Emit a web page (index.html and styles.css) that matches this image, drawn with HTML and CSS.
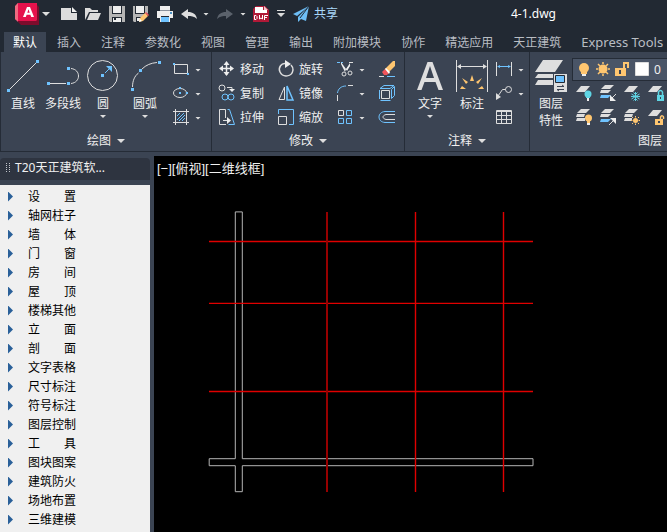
FILE: index.html
```html
<!DOCTYPE html>
<html lang="zh-CN">
<head>
<meta charset="utf-8">
<title>4-1.dwg</title>
<link rel="stylesheet" href="styles.css">
</head>
<body>
<div class="app">
  <header class="titlebar">
    <button class="tool logo" aria-label="A"><svg width="24" height="22" viewBox="0 0 24 22"><path d="M3 0h17l4 4v18H6l-3-3z" fill="#7d0c2c"/><path d="M0 4 3 0v19l-3-3z" fill="#f0506e"/><path d="M3 0h19v17l-1 1H3z" fill="#e5124c"/><path d="M3 0 0 3v13l3 2z" fill="#ee6a80"/><path d="m8 14 4-10h3l4 10h-2.800l-.8-2.200h-3.800l-.8 2.200zm4.300-4.200h2.400l-1.200-3.500z" fill="#fff"/></svg></button>
    <button class="tool mini" aria-label="菜单"><i class="caret"></i></button>
    <div class="quick">
      <button class="tool" aria-label="新建"><svg viewBox="0 0 16 16"><path d="M0 2h10v5h6v7H0z" fill="#dcdcdc"/><path d="m11 1 5 5h-5z" fill="#f2f2f2"/></svg></button>
      <button class="tool" aria-label="打开"><svg viewBox="0 0 16 16"><path d="M0 14V2h5l2 2h6v2H4z" fill="#dcdcdc"/><path d="M5 7h11l-3 7H2z" fill="#dcdcdc"/></svg></button>
      <button class="tool" aria-label="保存"><svg viewBox="0 0 16 16"><path d="M0 0h16v16H1l-1-1z" fill="#b5b5b5"/><path d="M3 0h10v8H3z" fill="#222933"/><path d="M4 0h8v7H4z" fill="#eee"/><path d="M3 11h10v5H3z" fill="#222933"/><path d="M4 12h8v4H4z" fill="#eee"/><path d="M5 12h2v2H5z" fill="#222933"/></svg></button>
      <button class="tool" aria-label="另存为"><svg viewBox="0 0 16 16"><path d="M0 0h15v7l-8 9H1l-1-1z" fill="#b5b5b5"/><path d="M2 0h10v8H2z" fill="#222933"/><path d="M3 0h8v7H3z" fill="#eee"/><path d="M3 11h6v5H3z" fill="#222933"/><path d="M4 12h4v3H4z" fill="#eee"/><path d="m6 16 1-4 5-5 3 3-5 5z" fill="#ffc670"/><path d="m12 7 1-1 3 3-1 1z" fill="#f2555a"/><path d="m6 16 1-3 2 2z" fill="#fff"/></svg></button>
      <button class="tool" aria-label="打印"><svg viewBox="0 0 16 16"><path d="M3 0h10v4H3zM0 5h16v7h-3v-2H3v2H0z" fill="#eee"/><path d="M3 4h10v1H3z" fill="#8b929c"/><path d="M4 11h8v5H4z" fill="#6fc3ff"/><path d="M3 10h1v6H3zm9 0h1v6h-1z" fill="#eee"/><path d="M13 6h2v2h-2z" fill="#4a90c4"/></svg></button>
      <button class="tool" aria-label="放弃"><svg viewBox="0 0 16 16"><path d="M0 8 7 3v3c5 0 8 2 9 7-3-3-6-3-9-3v3z" fill="#dedede"/></svg></button>
    </div>
    <button class="tool mini" aria-label="放弃列表"><i class="caret small"></i></button>
    <button class="tool redo" aria-label="重做"><svg viewBox="0 0 16 16"><path d="M16 8 9 3v3C4 6 1 8 0 13c3-3 6-3 9-3v3z" fill="#5b626c"/></svg></button>
    <button class="tool mini" aria-label="重做列表"><i class="caret small"></i></button>
    <button class="tool dwf" aria-label="DWF"><svg viewBox="0 0 16 16"><path d="M3 0h9l4 4v12H0V3z" fill="#b01937"/><path d="M2 1h8v3h4v4H2z" fill="#fff"/><path d="M11 0l4 4h-4z" fill="#f1c5cc"/><path d="M0 7h16v8H0z" fill="#b01937"/><path d="M1.500 9.500v4H3l1-1v-2l-1-1zM6.500 9v4l1.500-1 1.500 1V9M11.500 14V9.500H15m-3.500 2H14" fill="none" stroke="#fff"/></svg></button>
    <button class="tool mini" aria-label="自定义"><svg width="8" height="8" viewBox="0 0 8 8"><path d="M0 0h8v1H0zM0 3h8L4 7z" fill="#dcdcdc"/></svg></button>
    <button class="tool share"><svg viewBox="0 0 16 16"><path d="M16 0 0 8l4 2zM16 0 5 11v5l3-3 5 2z" fill="#6dbdf5"/><path d="m16 0-9 12" stroke="#222933" fill="none"/></svg>共享</button>
    <h1 class="doc">4-1.dwg</h1>
  </header>

  <nav class="tabs">
    <button class="tab on">默认</button><button class="tab">插入</button><button class="tab">注释</button><button class="tab">参数化</button><button class="tab">视图</button><button class="tab">管理</button><button class="tab">输出</button><button class="tab">附加模块</button><button class="tab">协作</button><button class="tab">精选应用</button><button class="tab">天正建筑</button><button class="tab latin">Express Tools</button>
  </nav>

  <div class="ribbon">
    <section class="panel draw">
      <div class="body">
        <button class="big"><svg viewBox="0 0 32 32"><path class="w" d="M2 30 30 2"/><path class="bf" d="M0 29h3v3H0zM29 0h3v3h-3z"/></svg><span>直线</span></button>
        <button class="big"><svg viewBox="0 0 32 32"><path class="w" d="M2 23.500h17M24 8.500c10 1 10 14 0 15"/><path class="bf" d="M0 22h3v3H0zM20 22h3v3h-3zM20 7h3v3h-3z"/></svg><span>多段线</span></button>
        <button class="big"><svg viewBox="0 0 32 32"><circle class="w" cx="15.500" cy="15.500" r="15"/><path class="b" d="m18 13 5-5"/><path class="bf" d="M14 14h3v3h-3zM25 6v6l-6-6z"/></svg><span>圆</span><i class="caret small"></i></button>
        <button class="big wide"><svg viewBox="0 0 32 32"><path class="w" d="M3.500 27c0-6 2-11 6-14M13 9c4-4 9-6 15-6.500"/><path class="bf" d="M2 28h3v3H2zM10 9h3v3h-3zM29 1h3v3h-3z"/></svg><span>圆弧</span><i class="caret small"></i></button>
        <div class="stack">
          <button class="sm" aria-label="矩形"><svg viewBox="0 0 18 18"><path class="w" d="M2.500 4.500h13v9h-13z"/><path class="bf" d="M1 3h2v2H1zM15 13h2v2h-2z"/></svg><i class="caret small"></i></button>
          <button class="sm" aria-label="椭圆"><svg viewBox="0 0 18 18"><ellipse class="w" cx="8" cy="9" rx="6.500" ry="4.500"/><path class="bf" d="M7 3h2v2H7zM7 8h2v2H7zM14 8h2v2h-2z"/></svg><i class="caret small"></i></button>
          <button class="sm" aria-label="图案填充"><svg viewBox="0 0 18 18"><path class="w" d="M1 3.500h16M1 14.500h16M3.500 1v16M14.500 1v16"/><path class="b" d="m5 8 3-3m-3 7 7-7m-5 8 6-6m-3 6 3-3"/></svg><i class="caret small"></i></button>
        </div>
      </div>
      <button class="name">绘图<i class="caret"></i></button>
    </section>

    <section class="panel modify">
      <div class="edit">
        <button class="sm"><svg viewBox="0 0 18 18"><path d="M8.500 3v12M3 8.500h11" stroke="#eee" stroke-width="1.500"/><path d="m8.500 1 3 4h-6zM8.500 16l3-4h-6zM1 8.500l4-3v6zM16 8.500l-4-3v6z" fill="#eee"/></svg>移动</button>
        <button class="sm"><svg viewBox="0 0 18 18"><path class="w" d="M10 4C4 2 1 8 3 12c3 6 12 5 13-2 0-2-1-4-2-5" stroke-width="1.500"/><path d="m8 0 6 4-6 4z" fill="#eee"/></svg>旋转</button>
        <button class="sm" aria-label="修剪"><svg viewBox="0 0 18 18"><path class="b" d="M1 2.500h6" stroke-dasharray="3 1"/><path class="w" d="M13 2.500h4M10 10l4-5"/><path d="m5 2 5 7-1 3-4-8zM14 3v3l-3 5-1-2z" fill="#eee"/><circle class="w" cx="8" cy="14" r="2"/><circle class="w" cx="14" cy="13" r="2"/></svg><i class="caret small"></i></button>
        <button class="sm" aria-label="删除"><svg viewBox="0 0 18 18"><path d="m7 9 8-8h2v5l-7 7z" fill="#ffc670"/><path d="m4 12 3-3 4 4-2 2H6z" fill="#f2555a"/><path d="m7 9 1-1 4 4-1 2z" fill="#fff"/><path class="w" d="M1 16.500h5"/><path class="b" d="M9 16.500h8"/></svg></button>

        <button class="sm"><svg viewBox="0 0 18 18"><circle class="w" cx="4" cy="4" r="3"/><circle class="b" cx="7" cy="13" r="3"/><circle class="b" cx="13" cy="13" r="3"/><path class="w" d="M9 3.500h5v3"/><path d="M11 5h6l-3 3z" fill="#eee"/></svg>复制</button>
        <button class="sm"><svg viewBox="0 0 18 18"><path class="w" d="M7.500 3v12.500H2z"/><path d="M10 2v14h6z" fill="none" stroke="#6fc3ff" stroke-width="1.500"/></svg>镜像</button>
        <button class="sm" aria-label="圆角"><svg viewBox="0 0 18 18"><path class="b" d="M1.500 9C2 5 5 2 10 2"/><path class="w" d="M12 1.500h5M1.500 11v6"/></svg><i class="caret small"></i></button>
        <button class="sm" aria-label="分解"><svg viewBox="0 0 18 18"><path class="w" d="M3.500 6.500h8v8h-8z"/><path class="b" d="M2 4.500 6 1.500h10l-4 3zM13.500 5.500l3-3v9l-3 3zM1.500 6v9m1 1.500h10"/></svg></button>

        <button class="sm"><svg viewBox="0 0 18 18"><path class="w" d="M8 16.500H1.500v-15h6V10M5 12.500h6"/><path d="m9 9 4 3.500L9 16z" fill="#eee"/><path class="b" d="M9.500 1.500h2l5 15h-6"/></svg>拉伸</button>
        <button class="sm"><svg viewBox="0 0 18 18"><path class="w" d="M1.500 8.500h8v8h-8z"/><path class="b" d="M1.500 6V1.500h15v15H12"/></svg>缩放</button>
        <button class="sm" aria-label="阵列"><svg viewBox="0 0 18 18"><path class="w" d="M2.500 2.500h5v5h-5z"/><path class="b" d="M10.500 2.500h5v5h-5zM2.500 10.500h5v5h-5zM10.500 10.500h5v5h-5z"/></svg><i class="caret small"></i></button>
        <button class="sm" aria-label="偏移"><svg viewBox="0 0 18 18"><path class="b" d="M17 3.500H7C-1 4-1 14 7 14.500h10"/><path class="w" d="M17 6.500H8c-4 1-4 4 0 5h9"/></svg></button>
      </div>
      <button class="name">修改<i class="caret"></i></button>
    </section>

    <section class="panel note">
      <div class="body">
        <button class="big mid"><svg viewBox="0 0 32 32"><path d="m3 30 10.500-28h5L29 30h-4.500l-3-8h-11l-3 8zm9-12h8l-4-12z" fill="#dedede"/></svg><span>文字</span><i class="caret small"></i></button>
        <button class="big mid"><svg viewBox="0 0 32 32"><path class="w" d="M.500 0v32M31.500 0v32M2 6.500h28"/><path d="m1 6.500 4-2.500v5zM31 6.500 27 4v5z" fill="#dedede"/><path d="m16 15 2 6h-4zM6 18l6 4-2 2zM26 18l-6 4 2 2zM4 29l2-3 4 3zM28 29l-2-3-4 3z" fill="#ffc670"/></svg><span>标注</span></button>
        <div class="stack">
          <button class="sm" aria-label="线性"><svg viewBox="0 0 18 18"><path class="w" d="M1.500 2v14M16.500 2v14"/><path class="b" d="M3 6.500h12"/><path class="bf" d="M2 6.500 5 5v3zM16 6.500 13 5v3z"/></svg><i class="caret small"></i></button>
          <button class="sm" aria-label="引线"><svg viewBox="0 0 18 18"><circle class="w" cx="13.500" cy="5.500" r="3"/><path class="w" d="M10.500 5.500h-3L3 12"/><path d="M1 16V9l5 4z" fill="#dedede"/></svg><i class="caret small"></i></button>
          <button class="sm" aria-label="表格"><svg viewBox="0 0 18 18"><path class="w" d="M1.500 2.500h15v13h-15zM1 3.500h16M1 7.500h16M1 11.500h16M6.500 4v12M11.500 4v12"/></svg></button>
        </div>
      </div>
      <button class="name">注释<i class="caret"></i></button>
    </section>

    <section class="panel layer">
      <div class="body">
        <button class="big mid"><svg viewBox="0 0 32 32"><path d="M8 0h20l-8 12H0zM3 14h15v4H0zM3 20h15v5H0z" fill="#dedede"/><path d="M19 14h13v18H19z" fill="#dedede"/><path d="M20.500 15.500h9v7h-9z" fill="#6fc3ff" stroke="#222933"/><path d="M22 26.500h7M22 29.500h7M27 25l2 1.500M24 31l-2-1.500" stroke="#3b4453" fill="none"/></svg><span>图层<br>特性</span></button>
        <div class="layers">
          <label class="combo">
            <svg width="80" height="22" viewBox="0 0 80 22"><circle cx="11" cy="9" r="5" fill="#ffc670"/><path d="M8 12h6v3H8z" fill="#ffc670"/><path d="M9 15h4v2H9z" fill="#eee"/><circle cx="30" cy="10" r="4.500" fill="#ffc670"/><path d="M30 3v2m0 10v2M23 10h2m10 0h2M25 5l2 2m6 6 2 2m0-10-2 2m-6 6-2 2" stroke="#ffc670" stroke-width="1.500"/><path d="M42 9h11v8H42z" fill="#ffc670"/><path d="M51 9V4h4v5" stroke="#ffc670" stroke-width="2" fill="none"/><path d="M46 11h2v4h-2z" fill="#3b4453"/><path d="M62.500 3.500h13v13h-13z" fill="#fff" stroke="#ddd"/></svg>
            <select aria-label="图层"><option>0</option></select>
          </label>
          <div class="icons">
            <button class="sm" aria-label="关闭图层"><svg viewBox="0 0 18 18"><path class="g" d="M6 2h9l-5 6H1z"/><circle cx="13" cy="10" r="3.500" fill="#5fd5e4"/><path d="M11 12h4v2h-4z" fill="#5fd5e4"/><path d="M12 14h2v3h-2z" fill="#eee"/></svg></button>
            <button class="sm" aria-label="置为当前"><svg viewBox="0 0 18 18"><path class="g" d="M6 1h9l-4 4H2zM2 6h10l-3 3H1z"/><path class="bf" d="M2 11h10l-3 3H1z"/><path class="w" d="m17 10-5 5"/><path d="M11 11v6h6z" fill="#eee"/></svg></button>
            <button class="sm" aria-label="冻结"><svg viewBox="0 0 18 18"><path class="g" d="M6 2h9l-5 6H1z"/><path d="M12.500 8v9M8.500 10l8 5M8.500 15l8-5M10.500 8.500l2 2 2-2M10.500 16.500l2-2 2 2M8 12.500h9" stroke="#5fd5e4" fill="none"/></svg></button>
            <button class="sm" aria-label="锁定"><svg viewBox="0 0 18 18"><path class="g" d="M6 2h9l-5 6H1z"/><path d="M10 11h7v6h-7z" fill="#5fd5e4"/><path d="M11.500 11V8c1-2 3-2 4 0v3" stroke="#5fd5e4" fill="none" stroke-width="1.500"/><path d="M13 13h1v2h-1z" fill="#3b4453"/></svg></button>
            <button class="sm" aria-label="打开所有图层"><svg viewBox="0 0 18 18"><path class="g" d="M6 1h9l-4 4H2zM2 6h8l-1 3H1zM2 10h8v3H1z"/><circle cx="13.500" cy="10" r="3.500" fill="#ffc670"/><path d="M12 12h3v3h-3z" fill="#ffc670"/><path d="M12 15h3v2h-3z" fill="#eee"/></svg></button>
            <button class="sm" aria-label="匹配图层"><svg viewBox="0 0 18 18"><path class="g" d="M6 1h9l-4 4H2zM2 6h10l-3 3H1z"/><path class="bf" d="M2 11h10l-3 3H1z"/><path class="w" d="m10 17 5-5"/><path d="M11 10h6v6z" fill="#eee"/></svg></button>
            <button class="sm" aria-label="解冻"><svg viewBox="0 0 18 18"><path class="g" d="M6 1h9l-4 4H2zM2 6h8l-1 3H1zM2 10h7v3H1z"/><circle cx="12.500" cy="12.500" r="2.500" fill="#ffc670"/><path d="M12.500 8v1.500m0 6V17M8 12.500h1.500m6 0H17M9 9l1 1m5 5 1 1m0-7-1 1m-5 5-1 1" stroke="#ffc670"/></svg></button>
            <button class="sm" aria-label="解锁"><svg viewBox="0 0 18 18"><path class="g" d="M6 2h9l-5 6H1z"/><path d="M8 11h8v6H8z" fill="#ffc670"/><path d="M13.500 11V9c1-2 3-1 3 0v2" stroke="#ffc670" fill="none" stroke-width="1.500"/><path d="M11 13h2v2h-2z" fill="#3b4453"/></svg></button>
          </div>
        </div>
      </div>
      <button class="name">图层</button>
    </section>
  </div>

  <main class="work">
    <aside class="side">
      <h2 class="sidehead"><svg width="4" height="10" viewBox="0 0 4 10"><path d="M.500 0v10M3.500 0v10" stroke="#c3c7cd" stroke-dasharray="1 1"/></svg>T20天正建筑软...</h2>
      <ul class="menu">
        <li><button>设　　置</button></li>
        <li><button>轴网柱子</button></li>
        <li><button>墙　　体</button></li>
        <li><button>门　　窗</button></li>
        <li><button>房　　间</button></li>
        <li><button>屋　　顶</button></li>
        <li><button>楼梯其他</button></li>
        <li><button>立　　面</button></li>
        <li><button>剖　　面</button></li>
        <li><button>文字表格</button></li>
        <li><button>尺寸标注</button></li>
        <li><button>符号标注</button></li>
        <li><button>图层控制</button></li>
        <li><button>工　　具</button></li>
        <li><button>图块图案</button></li>
        <li><button>建筑防火</button></li>
        <li><button>场地布置</button></li>
        <li><button>三维建模</button></li>
      </ul>
    </aside>
    <div class="canvas">
      <p class="view">[−][俯视][二维线框]</p>
      <svg class="plan" width="326" height="282" viewBox="208 211 326 282" fill="none">
        <path stroke="#b4b4b4" d="M235.300 458.700V211.900h7V458.700H533V465.700H242.300V491.700h-7V465.700H209.200V458.700z"/>
        <g stroke="#e00000">
          <path stroke-width="1.400" d="M209 241.500h324M209 303.400h324M209 391.500h324M415.500 212v280M503.500 212v280"/>
          <path stroke="#960000" stroke-width="2" d="M327 212v280"/>
        </g>
      </svg>
    </div>
  </main>
</div>
</body>
</html>
```
FILE: styles.css
```css
:root {
  --dark: #222933;
  --panel: #3b4453;
  --line: #252c37;
  --white: #dedede;
  --blue: #6fc3ff;
}

* { box-sizing: border-box; }

body {
  margin: 0;
  background: var(--panel);
  color: #f0f0f0;
  font: 12px/16px "Noto Sans", "Noto Sans CJK SC", sans-serif;
}

button, select {
  margin: 0;
  padding: 0;
  border: 0;
  background: none;
  color: inherit;
  font: inherit;
}

svg { display: block; flex: none; }

h1, h2, p, ul { margin: 0; padding: 0; font: inherit; }

.app {
  display: flex;
  flex-direction: column;
  min-height: 100vh;
  overflow: hidden;
}

.caret {
  flex: none;
  width: 8px;
  height: 4px;
  background: var(--white);
  clip-path: polygon(0 0, 100% 0, 50% 100%);
}

.caret.small { width: 6px; height: 3px; margin: 0 1px; }

.w { fill: none; stroke: var(--white); }
.b { fill: none; stroke: var(--blue); }
.bf { fill: var(--blue); }
.g { fill: var(--white); }

/* Title bar */
.titlebar {
  display: flex;
  align-items: center;
  height: 32px;
  padding: 0 0 4px 15px;
  background: var(--dark);
}

.tool { display: flex; align-items: center; justify-content: center; flex: none; }
.tool svg { height: 16px; }
.tool.logo svg { height: 22px; }
.tool.mini { width: 8px; margin: 0 5px; }
.tool.logo + .mini { margin: 0 11px 0 3px; }
.tool.mini svg { height: 8px; }
.quick { display: flex; gap: 8px; }
.quick svg, .redo svg, .dwf svg, .share svg { width: 16px; }
.redo { margin: 0 2px; }
.redo + .mini { margin: 0 6px 0 4px; }
.dwf + .mini { margin: 0 8px; }
.share { gap: 5px; color: #a9d7fa; }
.doc { flex: 1; padding-right: 111px; text-align: right; color: #fff; }

/* Ribbon tabs */
.tabs {
  display: flex;
  height: 20px;
  padding-left: 3px;
  background: var(--dark);
}

.tab {
  flex: none;
  margin: 0 1px;
  padding: 2px 9px 0;
  color: #b9bdc3;
  line-height: 18px;
}

.tab.on { background: var(--panel); color: #fff; }
.tab.latin { padding-top: 0; font-size: 13px; }

/* Ribbon panels */
.ribbon {
  display: flex;
  border-bottom: 1px solid var(--line);
  border-left: 1px solid var(--line);
}

.panel {
  display: flex;
  flex-direction: column;
  flex: none;
  padding-top: 5px;
  border-right: 1px solid var(--line);
}

.layer { flex: 1; border-right: 0; }

.body { display: flex; height: 72px; }
.draw .body { padding: 0 9px 0 2px; }
.note .body { padding: 0 4px; }

.big {
  display: flex;
  flex-direction: column;
  align-items: center;
  width: 40px;
  padding-top: 3px;
}

.big.mid { width: 42px; }
.big.wide { width: 44px; }
.big svg { width: 32px; height: 32px; margin-bottom: 4px; }
.big .caret { margin-top: 3px; }
.big span { white-space: nowrap; }

.stack { display: flex; flex-direction: column; padding-left: 5px; }
.note .stack { padding-left: 2px; }

.sm {
  display: flex;
  align-items: center;
  gap: 4px;
  height: 24px;
  padding-top: 2px;
  white-space: nowrap;
}

.sm svg { width: 18px; height: 18px; margin-bottom: 2px; }

.edit {
  display: grid;
  grid-template-columns: 47px 47px 30px 18px;
  column-gap: 12px;
  padding: 0 8px 0 6px;
}

.name {
  display: flex;
  align-items: center;
  justify-content: center;
  gap: 6px;
  height: 22px;
  padding-top: 2px;
}

.layer .name { justify-content: flex-end; padding-right: 5px; }

.layer .big svg { margin-bottom: 3px; }
.layer .big span { line-height: 17px; }
.layers { flex: 1; padding-top: 1px; }

.combo {
  display: flex;
  align-items: center;
  height: 23px;
  background: #4a5567;
  border: 1px solid var(--line);
  border-right: 0;
}

.combo select { appearance: none; flex: 1; padding-left: 1px; }

.icons {
  display: grid;
  grid-template-columns: repeat(4, 18px);
  column-gap: 6px;
  padding-left: 3px;
}

/* Work area */
.work { display: flex; flex: 1; padding-top: 4px; }

.side {
  display: flex;
  flex-direction: column;
  width: 150px;
  margin-right: 4px;
  padding-top: 2px;
}

.sidehead {
  display: flex;
  align-items: center;
  gap: 5px;
  height: 22px;
  margin-bottom: 5px;
  padding-left: 6px;
  padding-bottom: 2px;
  border-radius: 4px 4px 0 0;
  background: #2e3440;
}

.menu {
  flex: 1;
  padding-top: 2px;
  background: #f0f0f0;
  color: #000;
  list-style: none;
}

.menu button {
  display: flex;
  align-items: center;
  gap: 15px;
  width: 100%;
  height: 19px;
  padding-left: 8px;
}

.menu button::before {
  content: "";
  width: 5px;
  height: 10px;
  background: #2a6099;
  clip-path: polygon(0 0, 100% 50%, 0 100%);
}

.canvas { flex: 1; background: #000; }

.view {
  padding: 5px 3px 0;
  font-family: "Liberation Sans", "Noto Sans CJK SC", sans-serif;
  font-size: 13px;
}

.plan { margin: 34px 0 0 54px; }
```
